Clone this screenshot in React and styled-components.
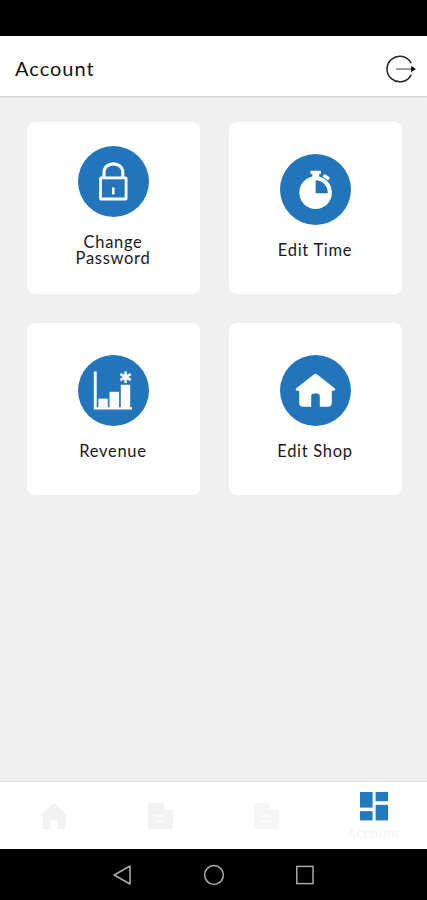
import styled, { createGlobalStyle } from "styled-components";

export default function App() {
  return (
    <Screen>
      <GlobalStyle />
      <StatusBar />
      <Header>
        <Title>Account</Title>
        <LogoutIcon />
      </Header>
      <Main>
        <Card>
          <Badge>
            <LockIcon />
          </Badge>
          <Label>Change Password</Label>
        </Card>
        <Card>
          <Badge>
            <TimerIcon />
          </Badge>
          <Label>Edit Time</Label>
        </Card>
        <Card>
          <Badge>
            <ChartIcon />
          </Badge>
          <Label>Revenue</Label>
        </Card>
        <Card>
          <Badge>
            <ShopIcon />
          </Badge>
          <Label>Edit Shop</Label>
        </Card>
      </Main>
      <TabBar>
        <Tab>
          <HomeIcon />
        </Tab>
        <Tab>
          <DocumentIcon color="#f3f3f3" />
        </Tab>
        <Tab>
          <DocumentIcon color="#f6f6f6" />
        </Tab>
        <Tab>
          <DashboardIcon />
          <TabLabel>Account</TabLabel>
        </Tab>
      </TabBar>
      <SystemBar>
        <BackIcon />
        <CircleIcon />
        <SquareIcon />
      </SystemBar>
    </Screen>
  );
}

function LogoutIcon() {
  return (
    <svg width="30" height="28" viewBox="0 0 30 28" fill="none">
      <path
        d="M25.2 8.2A12.8 12.8 0 1 0 25.2 19.8"
        stroke="#222"
        strokeWidth="1.5"
      />
      <path d="M10 14H26" stroke="#777" strokeWidth="1.4" />
      <path d="M25.2 10.8L29.8 14L25.2 17.2Z" fill="#000" />
    </svg>
  );
}

function LockIcon() {
  return (
    <svg width="71" height="71" viewBox="0 0 71 71" fill="none">
      <path
        d="M26 31V26.7C26 14.9 44.8 14.9 44.8 26.7V31"
        stroke="#fff"
        strokeWidth="3.1"
      />
      <rect
        x="22.5"
        y="31.8"
        width="25.6"
        height="21.2"
        rx="0.6"
        stroke="#fff"
        strokeWidth="2.8"
      />
      <path d="M35.3 41.5V48.4" stroke="#fff" strokeWidth="2.6" />
    </svg>
  );
}

function TimerIcon() {
  return (
    <svg width="71" height="71" viewBox="0 0 71 71" fill="#fff">
      <circle cx="35.6" cy="38.6" r="16.3" />
      <rect x="30.5" y="16.7" width="10.4" height="3.4" rx="0.5" />
      <rect x="32.3" y="19" width="6.8" height="4" />
      <rect
        x="42.8"
        y="21.4"
        width="7"
        height="3.4"
        rx="0.8"
        transform="rotate(35 46.2 23.1)"
      />
      <path
        d="M35.6 39.2V26.2C42.4 26.2 47.8 31.8 47.8 39.2Z"
        fill="#2375bb"
      />
    </svg>
  );
}

function ChartIcon() {
  return (
    <svg width="71" height="71" viewBox="0 0 71 71" fill="#fff">
      <path d="M15.8 16.6H18.7V52.2H54V54.5H15.8Z" />
      <rect x="20.4" y="43.6" width="9.4" height="9" />
      <rect x="31.5" y="36.8" width="9.6" height="16" />
      <rect x="42.8" y="29.8" width="9.4" height="23" />
      <path
        d="M47.6 16.4V28M42.4 19.2L52.8 25M52.8 19.2L42.4 25"
        stroke="#fff"
        strokeWidth="2.6"
      />
    </svg>
  );
}

function ShopIcon() {
  return (
    <svg width="71" height="71" viewBox="0 0 71 71" fill="#fff">
      <path d="M35.5 18.8Q36.4 18.8 37.2 19.5L54.4 33C56 34.4 55.4 35.8 53.6 35.8H51.8V47.8Q51.8 51.8 47.8 51.8H39.8V41.5Q39.8 38.4 37 38.4H34Q31.2 38.4 31.2 41.5V51.8H23.2Q19.2 51.8 19.2 47.8V35.8H17.4C15.6 35.8 15 34.4 16.6 33L33.8 19.5Q34.6 18.8 35.5 18.8Z" />
    </svg>
  );
}

function HomeIcon() {
  return (
    <svg width="30" height="28" viewBox="0 0 30 28" fill="#f2f2f2">
      <path d="M16 0.5L30 14H27.5V27H19.5V18.5Q16 15.5 12.5 18.5V27H5V14H2Z" />
    </svg>
  );
}

function DocumentIcon({ color }) {
  return (
    <svg width="25" height="28" viewBox="0 0 25 28" fill={color}>
      <path d="M2 1H15L17 8H25V25Q25 27 23 27H2Q0 27 0 25V3Q0 1 2 1Z" />
      <path d="M7 14H17M7 19H17" stroke="#fff" strokeWidth="1.6" />
    </svg>
  );
}

function DashboardIcon() {
  return (
    <svg width="30" height="30" viewBox="0 0 30 30" fill="#2378be">
      <rect x="1" y="1" width="12.6" height="15.6" />
      <rect x="16.6" y="1" width="12.4" height="9.2" />
      <rect x="1" y="20.2" width="12.6" height="9.2" />
      <rect x="16.6" y="13.8" width="12.4" height="15.6" />
    </svg>
  );
}

function BackIcon() {
  return (
    <svg width="20" height="22" viewBox="0 0 20 22" fill="none">
      <path
        d="M1.2 11L17 2V20Z"
        stroke="#aaa"
        strokeWidth="1.6"
        strokeLinejoin="round"
      />
    </svg>
  );
}

function CircleIcon() {
  return (
    <svg width="22" height="22" viewBox="0 0 22 22" fill="none">
      <circle cx="11" cy="11" r="9.4" stroke="#aaa" strokeWidth="1.5" />
    </svg>
  );
}

function SquareIcon() {
  return (
    <svg width="20" height="22" viewBox="0 0 20 22" fill="none">
      <rect
        x="1.8"
        y="2.4"
        width="16.2"
        height="17.2"
        stroke="#aaa"
        strokeWidth="1.5"
      />
    </svg>
  );
}

const GlobalStyle = createGlobalStyle`
  * {
    box-sizing: border-box;
  }

  body {
    margin: 0;
    font-family: Lato, "Liberation Sans", sans-serif;
  }

  svg {
    display: block;
    flex-shrink: 0;
  }
`;

const Screen = styled.div`
  display: flex;
  flex-direction: column;
  width: 427px;
  height: 900px;
  overflow: hidden;
  background: #f0f0f0;
`;

const StatusBar = styled.div`
  height: 36px;
  flex-shrink: 0;
  background: #000;
`;

const Header = styled.header`
  display: flex;
  align-items: center;
  justify-content: space-between;
  height: 60px;
  flex-shrink: 0;
  padding: 6px 11px 0 15px;
  background: #fff;
  box-shadow: 0 1px 2px rgba(0, 0, 0, 0.18);
`;

const Title = styled.h1`
  margin: 0;
  padding-bottom: 2px;
  font-size: 20px;
  font-weight: 400;
  letter-spacing: 1px;
  color: #111;
`;

const Main = styled.main`
  flex: 1;
  display: grid;
  grid-template-columns: 173px 173px;
  grid-auto-rows: 172.5px;
  gap: 28.5px 29px;
  align-content: start;
  padding: 25.5px 0 0 26.5px;
`;

const Card = styled.section`
  display: flex;
  flex-direction: column;
  align-items: center;
  justify-content: center;
  gap: 17px;
  padding-bottom: 3px;
  border-radius: 8px;
  background: #fff;
`;

const Badge = styled.div`
  width: 71px;
  height: 71px;
  border-radius: 50%;
  background: #2375bb;
`;

const Label = styled.p`
  max-width: 90px;
  margin: 0;
  font-size: 16.5px;
  line-height: 16.5px;
  letter-spacing: 0.7px;
  text-align: center;
  color: #1a1a1a;
`;

const TabBar = styled.nav`
  display: flex;
  height: 67px;
  flex-shrink: 0;
  background: #fff;
  box-shadow: 0 -1px 1px rgba(0, 0, 0, 0.04);
`;

const Tab = styled.div`
  flex: 1;
  display: flex;
  flex-direction: column;
  align-items: center;
  justify-content: center;
  gap: 5px;
`;

const TabLabel = styled.span`
  font-size: 13px;
  line-height: 14px;
  letter-spacing: 1px;
  color: #f5f5f5;
`;

const SystemBar = styled.footer`
  display: flex;
  align-items: center;
  justify-content: center;
  gap: 70px;
  height: 51px;
  flex-shrink: 0;
  background: #000;
`;
